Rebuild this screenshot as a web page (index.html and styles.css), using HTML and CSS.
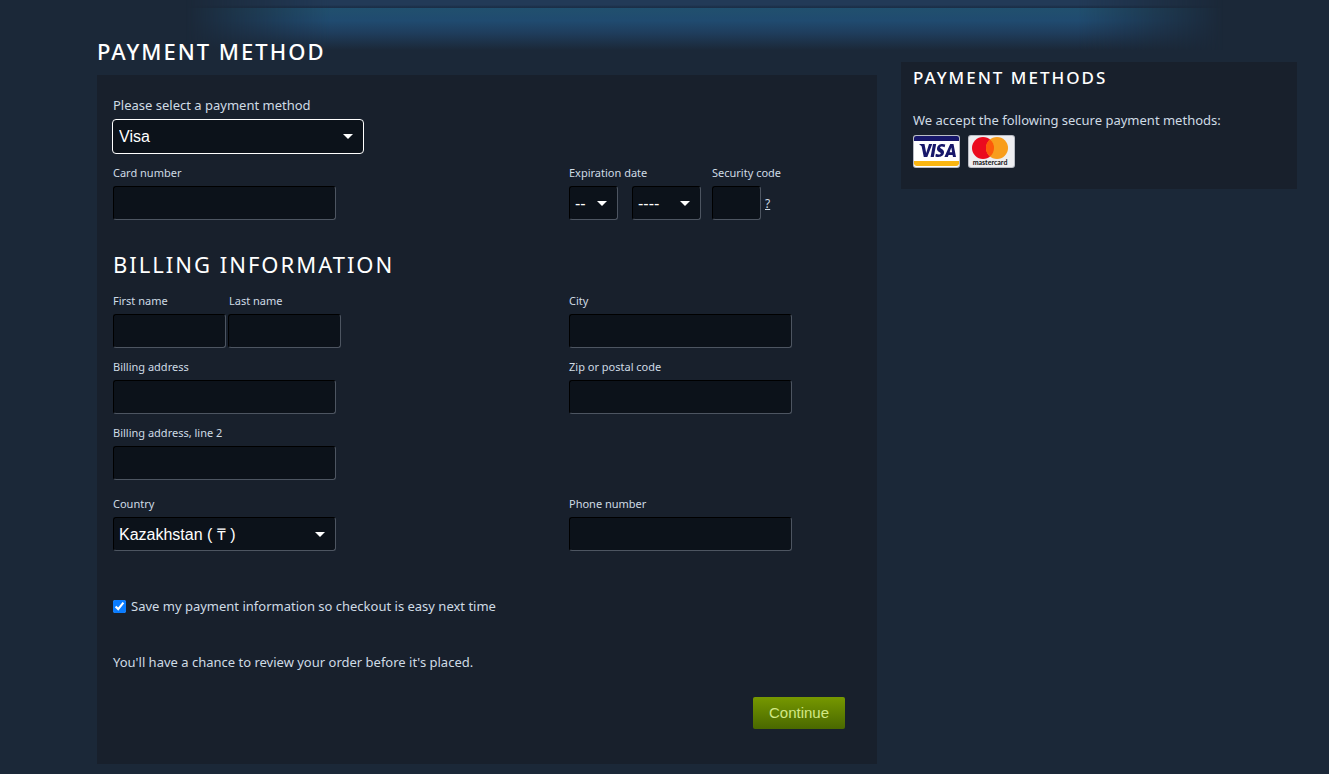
FILE: index.html
```
<!DOCTYPE html>
<html lang="en">
<head>
<meta charset="utf-8">
<meta name="viewport" content="width=device-width, initial-scale=1">
<title>Payment Method</title>
<link rel="stylesheet" href="styles.css">
</head>
<body>
<div class="glow-top"></div>
<div class="glow"></div>
<div class="page">
  <main class="main">
    <h1 class="heading">PAYMENT METHOD</h1>
    <form class="panel">
      <div class="method">
        <label class="method-label" for="method">Please select a payment method</label>
        <select class="control select method-select" id="method"><option>Visa</option></select>
      </div>
      <div class="row">
        <div class="field">
          <label for="card">Card number</label>
          <input class="control wide" id="card" type="text">
        </div>
        <div class="card-details">
          <div class="field">
            <label for="month">Expiration date</label>
            <div class="expiry">
              <select class="control select small month" id="month"><option>--</option></select>
              <select class="control select small year" id="year" aria-label="Expiration year"><option>----</option></select>
            </div>
          </div>
          <div class="field">
            <label for="cvv">Security code</label>
            <div class="security">
              <input class="control cvv" id="cvv" type="text">
              <a class="help" href="#">?</a>
            </div>
          </div>
        </div>
      </div>
      <h2 class="heading billing">BILLING INFORMATION</h2>
      <div class="row">
        <div class="names">
          <div class="field">
            <label for="first">First name</label>
            <input class="control name" id="first" type="text">
          </div>
          <div class="field">
            <label class="last-label" for="last">Last name</label>
            <input class="control name" id="last" type="text">
          </div>
        </div>
        <div class="field">
          <label for="city">City</label>
          <input class="control wide" id="city" type="text">
        </div>
      </div>
      <div class="row">
        <div class="field">
          <label for="address">Billing address</label>
          <input class="control wide" id="address" type="text">
        </div>
        <div class="field">
          <label for="zip">Zip or postal code</label>
          <input class="control wide" id="zip" type="text">
        </div>
      </div>
      <div class="row">
        <div class="field">
          <label for="address2">Billing address, line 2</label>
          <input class="control wide" id="address2" type="text">
        </div>
      </div>
      <div class="row country-row">
        <div class="field">
          <label for="country">Country</label>
          <select class="control select wide" id="country"><option>Kazakhstan ( ₸ )</option></select>
        </div>
        <div class="field">
          <label for="phone">Phone number</label>
          <input class="control wide" id="phone" type="tel">
        </div>
      </div>
      <div class="save">
        <input class="tick" id="save" type="checkbox" checked>
        <label for="save">Save my payment information so checkout is easy next time</label>
      </div>
      <p class="note">You'll have a chance to review your order before it's placed.</p>
      <div class="actions"><button class="continue" type="button">Continue</button></div>
    </form>
  </main>
  <aside class="side">
    <h2 class="side-title">PAYMENT METHODS</h2>
    <p class="side-text">We accept the following secure payment methods:</p>
    <div class="cards">
      <svg class="card" viewBox="0 0 47 33" role="img" aria-label="Visa">
        <rect width="47" height="33" rx="3" fill="#b9bcc4"/>
        <rect x="1" y="1" width="45" height="31" rx="2" fill="#fff"/>
        <path d="M1 6V3a2 2 0 0 1 2-2h41a2 2 0 0 1 2 2v3z" fill="#17176a"/>
        <path d="M1 26h45v3a3 3 0 0 1-3 2H4a3 3 0 0 1-3-2z" fill="#fbb612"/>
        <g fill="#17176a">
          <path d="M6 9h5.500l1.700 9L16 9h3.300l-5 13h-3.500L8.600 11.200z"/>
          <path d="M20 9h3.200l-2.400 13h-3.200z"/>
          <path d="M32.300 9.400l-.7 2.800c-1.800-.9-4.400-.9-4.500.4 0 1.300 4.200 1.600 3.900 5-.3 4.200-4.900 5.200-8.700 3.900l.6-2.800c2 1 4.600 1.100 4.800-.3.200-1.400-4-1.600-3.700-5 .3-4.200 5-5.300 8.300-4z"/>
          <path fill-rule="evenodd" d="M37.200 9h3.300L43 22h-3l-.4-2.100h-4L34.800 22h-3.400zm1.100 3.600l-1.700 4.700h2.500z"/>
        </g>
      </svg>
      <svg class="card" viewBox="0 0 47 33" role="img" aria-label="Mastercard">
        <rect width="47" height="33" rx="3" fill="#b9bcc4"/>
        <rect x="1" y="1" width="45" height="31" rx="2" fill="#eeeef1"/>
        <circle cx="15" cy="13" r="11" fill="#eb0a1e"/>
        <circle cx="29" cy="13" r="11" fill="#f89d1c"/>
        <path d="M22 4.500a11 11 0 0 1 0 17a11 11 0 0 1 0-17z" fill="#fd5a0a"/>
        <text class="card-text" x="22" y="30" text-anchor="middle">mastercard</text>
      </svg>
    </div>
  </aside>
</div>
</body>
</html>
```
FILE: styles.css
```
* { box-sizing: border-box; }
body {
  margin: 0;
  min-height: 100vh;
  position: relative;
  background: #1b2838;
  color: #cfdbe5;
  font-family: "Noto Sans", sans-serif;
  font-size: 13px;
}
h1, h2, p { margin: 0; }
.glow-top, .glow {
  position: absolute;
  left: 14%;
  right: 8%;
  -webkit-mask-image: linear-gradient(90deg, transparent, #000 14%, #000 86%, transparent);
  mask-image: linear-gradient(90deg, transparent, #000 14%, #000 86%, transparent);
}
.glow-top {
  top: 0;
  height: 8px;
  background: linear-gradient(#223a57 0, #223a57 5px, #1b2f48 7px);
}
.glow {
  top: 8px;
  height: 42px;
  background: linear-gradient(#21506e, #204b70 30%, #1f3d5c 60%, #1b2838);
}
.page {
  position: relative;
  display: grid;
  grid-template-columns: 780fr 396fr;
  gap: 24px;
  align-items: start;
  padding: 35px 32px 10px 97px;
}
.heading {
  color: #fff;
  font-size: 22px;
  font-weight: 500;
  line-height: 32px;
  letter-spacing: 2px;
}
.panel {
  margin-top: 8px;
  padding: 20px 32px 35px 16px;
  background: #18202c;
}
.method {
  display: flex;
  flex-direction: column;
  align-items: flex-start;
  margin-bottom: 9px;
}
.method-label { line-height: 20px; margin-bottom: 4px; }
.row {
  display: grid;
  grid-template-columns: 456px 1fr;
  margin-bottom: 9px;
}
.field {
  display: flex;
  flex-direction: column;
  align-items: flex-start;
  font-size: 11px;
}
.field label { line-height: 20px; margin-bottom: 3px; }
.control {
  height: 34px;
  padding: 0 6px;
  border: 1px solid #000;
  border-right-color: #4d5561;
  border-bottom-color: #4d5561;
  border-radius: 3px;
  background-color: #0c121a;
  color: #fff;
  font-family: "Liberation Sans", Arial, sans-serif;
  font-size: 16px;
}
.select {
  appearance: none;
  padding: 0 24px 0 5px;
  background-image: url("data:image/svg+xml,%3Csvg xmlns='http://www.w3.org/2000/svg' width='10' height='5'%3E%3Cpath d='M0 0h10L5 5z' fill='white'/%3E%3C/svg%3E");
  background-repeat: no-repeat;
  background-position: right 10px center;
}
.method-select {
  width: 252px;
  height: 35px;
  margin-left: -1px;
  padding-left: 6px;
  border: 1px solid #fff;
  border-radius: 4px;
}
.wide { width: 223px; }
.name { width: 113px; }
.month { width: 49px; }
.year { width: 69px; }
.small { padding-right: 20px; }
.cvv { width: 49px; }
.card-details { display: flex; gap: 11px; }
.expiry { display: flex; gap: 14px; }
.security { display: flex; align-items: center; gap: 4px; }
.help { color: #cfdbe5; font-size: 12px; }
.names { display: flex; gap: 2px; }
.last-label { padding-left: 1px; }
.billing { margin: 28px 0 11px; font-weight: 400; }
.country-row { margin-top: 14px; }
.save {
  display: flex;
  align-items: center;
  gap: 5px;
  margin-top: 45px;
  line-height: 20px;
}
.tick { width: 13px; height: 13px; margin: 0; accent-color: #0a7cff; }
.note { margin-top: 36px; line-height: 20px; }
.actions { display: flex; justify-content: flex-end; margin-top: 25px; }
.continue {
  padding: 0 16px;
  border: 0;
  border-radius: 2px;
  background: linear-gradient(#769800, #496800);
  color: #d2e885;
  font-family: "Liberation Sans", Arial, sans-serif;
  font-size: 15px;
  line-height: 32px;
}
.side {
  margin-top: 27px;
  padding: 4px 12px 21px;
  background: #18202c;
}
.side-title {
  color: #fff;
  font-size: 17px;
  font-weight: 500;
  line-height: 24px;
  letter-spacing: 2px;
}
.side-text { margin-top: 20px; line-height: 20px; }
.cards { display: flex; gap: 8px; margin-top: 5px; }
.card { width: 47px; height: 33px; }
.card-text {
  font-family: Lato, sans-serif;
  font-size: 7px;
  font-weight: 700;
  fill: #111;
}
```
